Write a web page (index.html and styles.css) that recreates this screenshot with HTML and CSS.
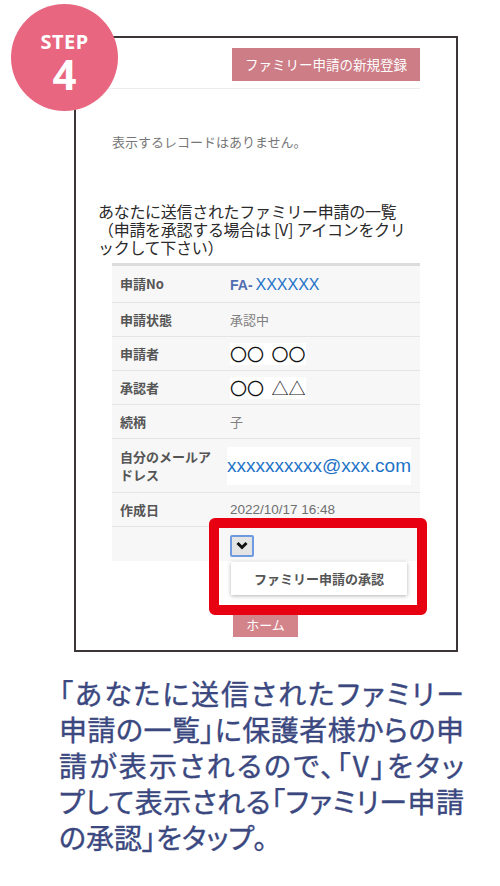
FILE: index.html
```html
<!DOCTYPE html>
<html lang="ja">
<head>
  <meta charset="UTF-8" />
  <meta name="viewport" content="width=device-width, initial-scale=1" />
  <title>STEP 4 ファミリー申請の承認</title>
  <link rel="stylesheet" href="styles.css">
</head>
<body>
  <div class="page">
    <div class="step-badge">
      <div class="step-label">STEP</div>
      <div class="step-num">4</div>
    </div>

    <div class="phone">
      <div class="topbar">
        <div class="btn btn-new">ファミリー申請の新規登録</div>
      </div>

      <p class="empty">表示するレコードはありません。</p>

      <h2 class="list-title">あなたに送信されたファミリー申請の一覧<br>（申請を承認する場合は [V] アイコンをクリ<br>ックして下さい）</h2>

      <div class="detail">
        <div class="row">
          <div class="label">申請No</div>
          <div class="value"><span class="no-prefix">FA-</span> <span class="link">XXXXXX</span></div>
        </div>
        <div class="row">
          <div class="label">申請状態</div>
          <div class="value muted">承認中</div>
        </div>
        <div class="row">
          <div class="label">申請者</div>
          <div class="value name">〇〇&nbsp;&nbsp;〇〇</div>
        </div>
        <div class="row">
          <div class="label">承認者</div>
          <div class="value name">〇〇&nbsp;&nbsp;△△</div>
        </div>
        <div class="row">
          <div class="label">続柄</div>
          <div class="value muted">子</div>
        </div>
        <div class="row row-tall">
          <div class="label">自分のメールア<br>ドレス</div>
          <div class="value mail">xxxxxxxxxx@xxx.com</div>
        </div>
        <div class="row">
          <div class="label">作成日</div>
          <div class="value muted date">2022/10/17 16:48</div>
        </div>
        <div class="row row-action">
          <div class="label"></div>
          <div class="value">
            <span class="select-btn">
              <svg width="12" height="9" viewBox="0 0 12 9"><path d="M1.5 2 L6 6.5 L10.5 2" fill="none" stroke="#111" stroke-width="3"/></svg>
            </span>
          </div>
        </div>
      </div>

      <div class="home-wrap">
        <div class="btn btn-home">ホーム</div>
      </div>

      <div class="menu">ファミリー申請の承認</div>
      <div class="highlight"></div>
    </div>

    <div class="caption">
      <span class="line">「あなたに送信されたファミリー</span>
      <span class="line">申請の一覧」に保護者様からの申</span>
      <span class="line">請が表示されるので、「V」をタッ</span>
      <span class="line">プして表示される「ファミリー申請</span>
      <span class="line last">の承認」をタップ。</span>
    </div>
  </div>
</body>
</html>
```

FILE: styles.css
```css
html, body {
  margin: 0;
  padding: 0;
  background: #fff;
  font-family: "Noto Sans CJK JP", "Noto Sans", sans-serif;
}

.page {
  position: relative;
  width: 500px;
  height: 886px;
  overflow: hidden;
  padding-top: 36px;
  box-sizing: border-box;
}

/* step badge sits over the frame corner */
.step-badge {
  position: absolute;
  left: 11px;
  top: 4px;
  width: 107px;
  height: 107px;
  border-radius: 50%;
  background: #e8667f;
  color: #fff;
  text-align: center;
  z-index: 5;
  font-family: "Noto Sans", "Liberation Sans", sans-serif;
  font-weight: bold;
}

.step-label {
  font-size: 20px;
  line-height: 20px;
  margin-top: 28px;
  letter-spacing: 0.5px;
}

.step-num {
  font-size: 42px;
  line-height: 42px;
  margin-top: 1px;
}

.phone {
  position: relative;
  margin-left: 74px;
  width: 384px;
  height: 616px;
  border: 2px solid #3b3535;
  box-sizing: border-box;
  padding-right: 36px;
  overflow: hidden;
}

.topbar {
  display: flex;
  justify-content: flex-end;
  padding-top: 10px;
  height: 51px;
  box-sizing: border-box;
  border-bottom: 1px solid #ececec;
}

.btn {
  color: #fff;
  text-align: center;
}

.btn-new {
  width: 188px;
  height: 33px;
  line-height: 33px;
  background: #cd7d86;
  font-size: 13.5px;
}

.empty {
  margin: 44px 0 0 36px;
  font-size: 13px;
  line-height: 18px;
  color: #777;
}

.list-title {
  margin: 51px 0 0 22px;
  font-size: 16px;
  line-height: 18px;
  font-weight: normal;
  color: #2a2a2a;
  letter-spacing: -0.3px;
}

.detail {
  margin: 7px 0 0 36px;
  border-top: 3px solid #dcdcdc;
  background: #f7f7f7;
}

.row {
  display: flex;
  align-items: center;
  height: 34px;
  border-top: 1px solid #e4e4e4;
  box-sizing: border-box;
}

.row:first-child {
  border-top: none;
  height: 36px;
}

.row-tall {
  height: 54px;
}

.row-action {
  height: 35px;
}

.label {
  width: 118px;
  padding-left: 8px;
  box-sizing: border-box;
  font-size: 13px;
  line-height: 18px;
  font-weight: bold;
  color: #555;
}

.value {
  font-size: 13px;
  color: #333;
}

.muted {
  color: #808080;
  font-family: "Liberation Sans", "Noto Sans CJK JP", sans-serif;
}

.date {
  font-size: 13.5px;
  color: #6f6f6f;
}

.no-prefix {
  color: #4f6db0;
  font-family: "Liberation Sans", sans-serif;
  font-weight: bold;
  font-size: 14px;
}

.link {
  color: #1e73c8;
  font-family: "Liberation Sans", sans-serif;
  font-size: 16px;
}

.name {
  font-size: 17px;
  line-height: 22px;
  color: #111;
  background: #fff;
}

.mail {
  font-family: "Liberation Sans", sans-serif;
  font-size: 19px;
  color: #1e73c8;
  background: #fff;
  padding: 8px 0;
  margin-left: -3px;
}

.select-btn {
  display: flex;
  align-items: center;
  justify-content: center;
  width: 24px;
  height: 22px;
  margin-top: 3px;
  border: 2px solid #6d9ae0;
  border-radius: 2px;
  background: #e4e4e4;
  box-sizing: border-box;
}

.home-wrap {
  margin: 51px 0 0 157px;
}

.btn-home {
  width: 65px;
  height: 25px;
  line-height: 25px;
  font-size: 13px;
  background: #d3848b;
}

/* open dropdown over the table */
.menu {
  position: absolute;
  left: 155px;
  top: 524px;
  width: 176px;
  height: 33px;
  line-height: 33px;
  background: #fff;
  box-shadow: 0 1px 4px rgba(0, 0, 0, 0.3);
  font-size: 13px;
  font-weight: bold;
  color: #555;
  text-align: center;
  z-index: 2;
}

/* red callout frame */
.highlight {
  position: absolute;
  left: 133px;
  top: 480px;
  width: 218px;
  height: 97px;
  border: 10px solid #e60012;
  border-radius: 6px;
  box-sizing: border-box;
  z-index: 3;
}

.caption {
  margin: 23px 0 0 59px;
  width: 405px;
  font-size: 28px;
  line-height: 36px;
  color: #3b4880;
  -webkit-text-stroke: 0.4px #3b4880;
  font-feature-settings: "palt";
}

.line {
  display: block;
  text-align: justify;
  text-align-last: justify;
}

.line.last {
  text-align-last: left;
}
```
